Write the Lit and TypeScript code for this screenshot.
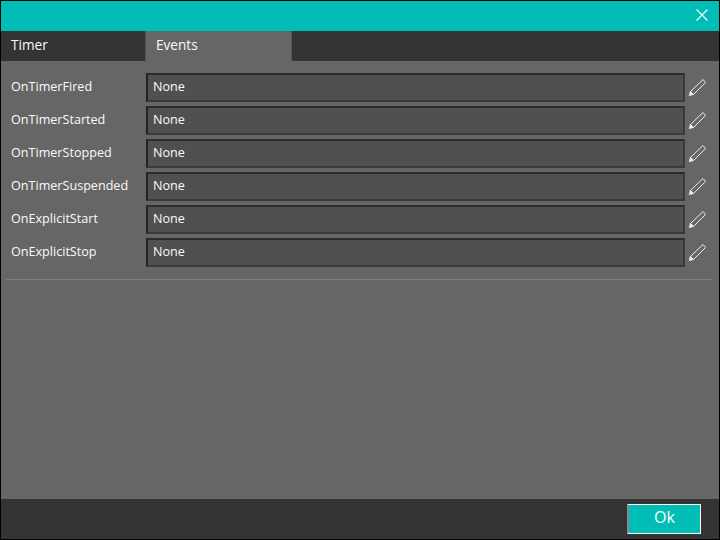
import { LitElement, html, css } from "lit";
import { customElement } from "lit/decorators.js";

const EVENTS = ["OnTimerFired","OnTimerStarted","OnTimerStopped","OnTimerSuspended","OnExplicitStart","OnExplicitStop"];

@customElement("app-root")
export class AppRoot extends LitElement {
  static styles = css`
    :host { display: block; width: 720px; height: 540px; font-family: "Open Sans", "Noto Sans", sans-serif; font-size: 12.6px; color: #fafafa; }
    .win { box-sizing: border-box; width: 720px; height: 540px; border: 1px solid #000; background: #666; display: flex; flex-direction: column; }
    .title { height: 30px; background: #00bdb5; display: flex; justify-content: flex-end; align-items: center; padding-right: 11px; flex: none; }
    .title svg { display: block; margin-top: -3px; }
    .tabs { height: 30px; background: #333; display: flex; flex: none; }
    .tab { box-sizing: border-box; height: 30px; display: flex; align-items: center; padding: 0 0 3px 10px; font-size: 13.6px; }
    .t1 { width: 144px; }
    .t2 { width: 147px; background: #666; border-left: 1px solid #555; border-right: 1px solid #555; }
    .body { flex: 1; padding: 12px 0 0 0; }
    .rows { display: flex; flex-direction: column; gap: 4px; padding-bottom: 12px; border-bottom: 1px solid #7a8084; margin: 0 6px 0 5px; }
    .row { display: flex; align-items: center; height: 29px; padding-left: 5px; }
    .label { width: 135px; flex: none; padding-bottom: 3px; }
    .field { box-sizing: border-box; width: 539px; height: 29px; flex: none; background: #505050; border: 2px solid #3a3a3a; border-left-color: #222; border-top-color: #2c2c2c; display: flex; align-items: center; padding: 0 0 3px 5px; }
    .edit { margin: -2px 0 0 3px; display: block; flex: none; }
    .foot { height: 40px; background: #333; display: flex; justify-content: flex-end; align-items: center; padding-right: 18px; flex: none; }
    .ok { box-sizing: border-box; width: 74px; height: 30px; background: #00bdb5; border: 1px solid #fff; border-left: 2px solid #888; display: flex; align-items: center; justify-content: center; font-size: 16px; color: #fff; padding-bottom: 5px; }
  `;
  render() {
    return html`<div class="win">
      <div class="title">
        <svg width="12" height="12" viewBox="0 0 12 12"><path d="M.5.5l11 11M11.5.5l-11 11" stroke="#fff" stroke-width="1.1" fill="none"/></svg>
      </div>
      <div class="tabs"><div class="tab t1">Timer</div><div class="tab t2">Events</div></div>
      <div class="body">
        <div class="rows">
          ${EVENTS.map(e => html`<div class="row"><div class="label">${e}</div><div class="field">None</div>
            <svg class="edit" width="18" height="19" viewBox="0 0 18 19"><path d="M15 2.500l2.500 3L5.500 17.500 2.500 14.500z" fill="none" stroke="#eee" stroke-width="1"/><path d="M1 19l1.200-4.800 3.600 3.300z" fill="#eee" stroke="#eee" stroke-width=".4"/></svg>
          </div>`)}
        </div>
      </div>
      <div class="foot"><div class="ok">Ok</div></div>
    </div>`;
  }
}
